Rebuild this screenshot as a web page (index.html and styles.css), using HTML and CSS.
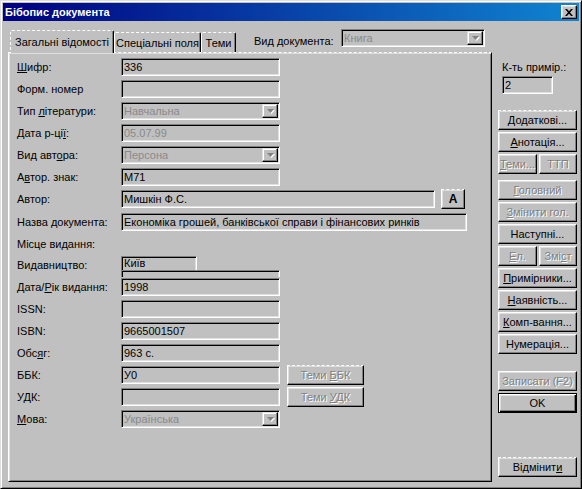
FILE: index.html
```html
<!DOCTYPE html>
<html lang="uk">
<head>
<meta charset="utf-8">
<title>Бібопис документа</title>
<link rel="stylesheet" href="styles.css">
</head>
<body>
<div class="win">
  <div class="title">
    <span class="title-text">Бібопис документа</span>
    <div class="close"><svg width="8" height="7" viewBox="0 0 8 7"><path d="M0 0h2l2 2.3L6 0h2L5 3.5 8 7H6L4 4.7 2 7H0l3-3.5z" fill="#000"/></svg></div>
  </div>
  <div class="main">
    <div class="left">
      <div class="tabrow">
        <div class="tab sel">Загальні відомості</div>
        <div class="tab t2">Спеціальні поля</div>
        <div class="tab t3">Теми</div>
        <div class="vidlabel">Вид документа:</div>
        <div class="f combo vidcombo dis"><span class="ctext">Книга</span><span class="dd"><svg width="7" height="4" viewBox="0 0 7 4"><path d="M0 0h7L3.5 4z" fill="#808080"/></svg></span></div>
      </div>
      <div class="panel">
        <div class="row"><div class="lbl"><u>Ш</u>ифр:</div><div class="f w159">336</div></div>
        <div class="row"><div class="lbl">Форм. номер</div><div class="f w159"></div></div>
        <div class="row"><div class="lbl">Тип <u>л</u>ітератури:</div><div class="f combo w159 dis"><span class="ctext">Навчальна</span><span class="dd"><svg width="7" height="4" viewBox="0 0 7 4"><path d="M0 0h7L3.5 4z" fill="#808080"/></svg></span></div></div>
        <div class="row"><div class="lbl">Дата р-ці<u>ї</u>:</div><div class="f w159 dis"><span class="ctext">05.07.99</span></div></div>
        <div class="row"><div class="lbl">Вид авт<u>о</u>ра:</div><div class="f combo w159 dis"><span class="ctext">Персона</span><span class="dd"><svg width="7" height="4" viewBox="0 0 7 4"><path d="M0 0h7L3.5 4z" fill="#808080"/></svg></span></div></div>
        <div class="row"><div class="lbl">А<u>в</u>тор. знак:</div><div class="f w159">М71</div></div>
        <div class="row r-author"><div class="lbl">Автор:</div><div class="f w314">Мишкін Ф.С.</div><div class="btn abtn dash"><span>A</span></div></div>
        <div class="row r-name"><div class="lbl">Назва документа:</div><div class="f w346">Економіка грошей, банківської справи і фінансових ринків</div></div>
        <div class="row r-place"><div class="lbl">Місце видання:</div></div>
        <div class="row r-pub"><div class="lbl">Видавництво:</div>
          <div class="pubstack">
            <div class="clip1"><div class="f w76 pubtext">Київ</div></div>
            <div class="clip2"><div class="f w159"></div></div>
          </div>
        </div>
        <div class="row"><div class="lbl">Дата/<u>Р</u>ік видання:</div><div class="f w159">1998</div></div>
        <div class="row"><div class="lbl">ISSN:</div><div class="f w159"></div></div>
        <div class="row"><div class="lbl">ISBN:</div><div class="f w159">9665001507</div></div>
        <div class="row"><div class="lbl">Обс<u>я</u>г:</div><div class="f w159">963 с.</div></div>
        <div class="row"><div class="lbl">ББК:</div><div class="f w159">У0</div><div class="btn tbtn dis dash"><span>Теми <u>Б</u>БК</span></div></div>
        <div class="row"><div class="lbl">УДК:</div><div class="f w159"></div><div class="btn tbtn dis"><span>Теми <u>У</u>ДК</span></div></div>
        <div class="row"><div class="lbl"><u>М</u>ова:</div><div class="f combo w159 dis"><span class="ctext">Українська</span><span class="dd"><svg width="7" height="4" viewBox="0 0 7 4"><path d="M0 0h7L3.5 4z" fill="#808080"/></svg></span></div></div>
      </div>
    </div>
    <div class="right">
      <div class="qlabel">К-ть примір.:</div>
      <div class="f qfield">2</div>
      <div class="group g1">
        <div class="btn dash"><span><u>Д</u>одаткові...</span></div>
        <div class="btn"><span><u>А</u>нотація...</span></div>
        <div class="pair"><div class="btn dis half1"><span><u>Т</u>еми...</span></div><div class="btn dis half2"><span>ТТП</span></div></div>
      </div>
      <div class="group g2">
        <div class="btn dis"><span><u>Г</u>оловний</span></div>
        <div class="btn dis"><span><u>З</u>мінити гол.</span></div>
        <div class="btn"><span>Наступні...</span></div>
        <div class="pair"><div class="btn dis half1"><span><u>Е</u>л.</span></div><div class="btn dis half2"><span>Змі<u>с</u>т</span></div></div>
        <div class="btn"><span><u>П</u>римірники...</span></div>
        <div class="btn"><span><u>Н</u>аявність...</span></div>
        <div class="btn"><span><u>К</u>омп-вання...</span></div>
        <div class="btn"><span>Нумерація...</span></div>
      </div>
      <div class="group g3">
        <div class="btn dis"><span>Записати (F2)</span></div>
        <div class="btn def"><span>OK</span></div>
      </div>
      <div class="btn dash cancel"><span>Відмінит<u>и</u></span></div>
    </div>
  </div>
</div>
</body>
</html>
```
FILE: styles.css
```css
* { box-sizing: border-box; }
html, body { margin: 0; padding: 0; }
body {
  width: 582px;
  height: 489px;
  overflow: hidden;
  background: #c0c0c0;
  font: 11px "Liberation Sans", Arial, sans-serif;
  color: #000;
}
u { text-decoration: underline; text-underline-offset: 1px; }

.win {
  width: 582px;
  height: 489px;
  border: 1px solid;
  border-color: #dfdfdf #000 #000 #dfdfdf;
  box-shadow: inset 1px 1px #fff, inset -1px -1px #808080;
  padding: 2px;
  display: flex;
  flex-direction: column;
  background: #c0c0c0;
}

.title {
  height: 18px;
  flex: none;
  background: linear-gradient(90deg, #000080, #1084d0);
  display: flex;
  align-items: center;
  justify-content: space-between;
  padding: 0 2px;
  color: #fff;
  font-weight: bold;
  font-size: 11px;
}
.close {
  width: 16px;
  height: 14px;
  background: #c0c0c0;
  border: 1px solid;
  border-color: #fff #000 #000 #fff;
  box-shadow: inset -1px -1px #808080, inset 1px 1px #dfdfdf;
  display: flex;
  align-items: center;
  justify-content: center;
}

.main {
  flex: 1;
  display: flex;
  padding: 8px 0 4px 5px;
  gap: 6px;
}
.left {
  width: 484px;
  display: flex;
  flex-direction: column;
}

.tabrow {
  height: 23px;
  flex: none;
  display: flex;
  align-items: flex-end;
}
.tab {
  height: 20px;
  border: 1px solid #fff;
  border-top-style: dashed;
  border-right-color: #000;
  border-bottom: none;
  border-radius: 2px 2px 0 0;
  box-shadow: inset -1px 0 #808080;
  display: flex;
  align-items: center;
  justify-content: center;
  white-space: nowrap;
  background: #c0c0c0;
}
.tab.sel {
  width: 104px;
  height: 23px;
  margin-left: 2px;
  margin-bottom: -1px;
  padding-bottom: 1px;
  border-left-style: dashed;
  position: relative;
  z-index: 1;
}
.tab.t2 { width: 87px; }
.tab.t3 { width: 35px; }
.vidlabel {
  width: 87px;
  margin-left: 18px;
  align-self: center;
  margin-top: 1px;
  white-space: nowrap;
}
.vidcombo {
  align-self: flex-start;
  width: 144px;
}

.panel {
  flex: 1;
  border: 1px solid;
  border-color: #fff #000 #000 #fff;
  border-top-style: dashed;
  box-shadow: inset 1px 1px #dfdfdf, inset -1px -1px #808080;
  padding: 5px 0 0 8px;
  display: flex;
  flex-direction: column;
}

.row {
  display: flex;
  align-items: center;
  height: 18px;
  margin-bottom: 4px;
  flex: none;
}
.lbl {
  width: 104px;
  flex: none;
  white-space: nowrap;
}
.r-author { margin-bottom: 5px; }
.r-place { margin-bottom: 3px; }
.r-pub { height: 22px; margin-bottom: 0; align-items: flex-start; }
.r-pub .lbl { line-height: 18px; }

.f {
  height: 18px;
  flex: none;
  border: 1px solid;
  border-color: #808080 #fff #fff #808080;
  box-shadow: inset 1px 1px #000, inset -1px -1px #dfdfdf;
  padding: 0 1px 0 2px;
  display: flex;
  align-items: center;
  white-space: nowrap;
  overflow: hidden;
  background: #c0c0c0;
}
.pubtext { align-items: flex-start; padding-top: 0; line-height: 12px; }
.w76 { width: 76px; }
.w159 { width: 159px; }
.w314 { width: 314px; }
.w346 { width: 346px; }

.dis { color: #808080; }
.dis .ctext, .btn.dis span { text-shadow: 1px 1px #fff; color: #808080; }
.f.dis .ctext { text-shadow: none; color: #8a8a8a; }

.combo .ctext { flex: 1; }
.dd {
  width: 16px;
  height: 14px;
  flex: none;
  border: 1px solid;
  border-color: #dfdfdf #000 #000 #dfdfdf;
  box-shadow: inset -1px -1px #808080, inset 1px 1px #fff;
  display: flex;
  align-items: center;
  justify-content: center;
  background: #c0c0c0;
}
.dd svg { filter: drop-shadow(1px 1px 0 #fff); }

.pubstack {
  display: flex;
  flex-direction: column;
}
.clip1 { height: 14px; overflow: hidden; }
.clip2 { height: 7px; overflow: hidden; }

.btn {
  height: 20px;
  flex: none;
  border: 1px solid;
  border-color: #fff #000 #000 #fff;
  box-shadow: inset -1px -1px #808080, inset 1px 1px #dfdfdf;
  display: flex;
  align-items: center;
  justify-content: center;
  background: #c0c0c0;
  white-space: nowrap;
}
.btn.dash { border-top-style: dashed; }
.btn.def {
  border-color: #000;
  box-shadow: inset 1px 1px #fff, inset -1px -1px #000, inset -2px -2px #808080, inset 2px 2px #dfdfdf;
}
.abtn {
  width: 24px;
  margin-left: 6px;
  font-weight: bold;
  font-size: 12px;
}
.tbtn {
  width: 77px;
  margin-left: 7px;
}

.right {
  width: 79px;
  display: flex;
  flex-direction: column;
}
.qlabel {
  margin-top: 32px;
  padding-left: 4px;
  height: 13px;
  line-height: 13px;
  white-space: nowrap;
}
.qfield {
  margin: 2px 0 0 4px;
  width: 51px;
}
.group {
  display: flex;
  flex-direction: column;
  gap: 2px;
}
.g1 { margin-top: 16px; }
.g2 { margin-top: 6px; }
.g3 { margin-top: 17px; }
.pair { display: flex; gap: 2px; }
.half1 { width: 39px; }
.half2 { width: 38px; }
.cancel { margin-top: auto; margin-bottom: 5px; }
```
